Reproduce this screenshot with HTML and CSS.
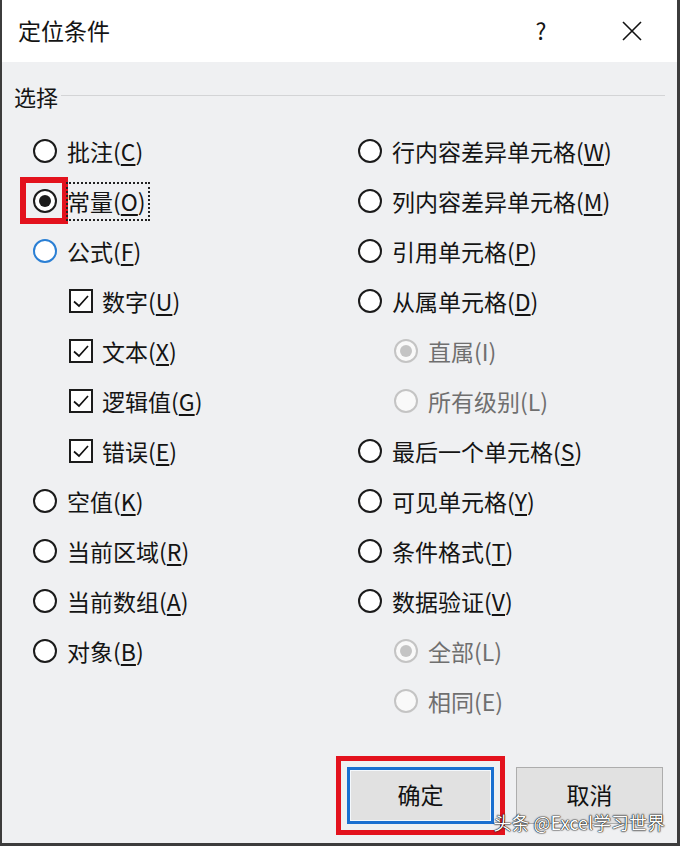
FILE: index.html
```html
<!DOCTYPE html>
<html lang="zh-CN">
<head>
<meta charset="utf-8">
<title>定位条件</title>
<link rel="stylesheet" href="styles.css">
</head>
<body>
<div class="dialog">
  <header class="titlebar">
    <span class="title">定位条件</span>
    <span class="help">?</span>
    <span class="close">
      <svg width="20" height="20" viewBox="0 0 20 20"><path d="M1 1 L19 19 M19 1 L1 19" stroke="#111" stroke-width="1.6" fill="none"/></svg>
    </span>
  </header>
  <main class="content">
    <div class="group-head"><span class="group-title">选择</span><span class="rule"></span></div>
    <div class="cols">
      <div class="col">
        <div class="opt"><span class="radio"></span><span class="lbl">批注(<u>C</u>)</span></div>
        <div class="opt"><span class="radio checked marked"></span><span class="lbl focus">常量(<u>O</u>)</span></div>
        <div class="opt"><span class="radio hover"></span><span class="lbl">公式(<u>F</u>)</span></div>
        <div class="opt sub"><span class="check"><svg width="20" height="20" viewBox="0 0 20 20"><path d="M3 10.5 L8 15 L17 5" stroke="#111" stroke-width="1.7" fill="none"/></svg></span><span class="lbl">数字(<u>U</u>)</span></div>
        <div class="opt sub"><span class="check"><svg width="20" height="20" viewBox="0 0 20 20"><path d="M3 10.5 L8 15 L17 5" stroke="#111" stroke-width="1.7" fill="none"/></svg></span><span class="lbl">文本(<u>X</u>)</span></div>
        <div class="opt sub"><span class="check"><svg width="20" height="20" viewBox="0 0 20 20"><path d="M3 10.5 L8 15 L17 5" stroke="#111" stroke-width="1.7" fill="none"/></svg></span><span class="lbl">逻辑值(<u>G</u>)</span></div>
        <div class="opt sub"><span class="check"><svg width="20" height="20" viewBox="0 0 20 20"><path d="M3 10.5 L8 15 L17 5" stroke="#111" stroke-width="1.7" fill="none"/></svg></span><span class="lbl">错误(<u>E</u>)</span></div>
        <div class="opt"><span class="radio"></span><span class="lbl">空值(<u>K</u>)</span></div>
        <div class="opt"><span class="radio"></span><span class="lbl">当前区域(<u>R</u>)</span></div>
        <div class="opt"><span class="radio"></span><span class="lbl">当前数组(<u>A</u>)</span></div>
        <div class="opt"><span class="radio"></span><span class="lbl">对象(<u>B</u>)</span></div>
      </div>
      <div class="col">
        <div class="opt"><span class="radio"></span><span class="lbl">行内容差异单元格(<u>W</u>)</span></div>
        <div class="opt"><span class="radio"></span><span class="lbl">列内容差异单元格(<u>M</u>)</span></div>
        <div class="opt"><span class="radio"></span><span class="lbl">引用单元格(<u>P</u>)</span></div>
        <div class="opt"><span class="radio"></span><span class="lbl">从属单元格(<u>D</u>)</span></div>
        <div class="opt sub disabled"><span class="radio checked"></span><span class="lbl">直属(I)</span></div>
        <div class="opt sub disabled"><span class="radio"></span><span class="lbl">所有级别(L)</span></div>
        <div class="opt"><span class="radio"></span><span class="lbl">最后一个单元格(<u>S</u>)</span></div>
        <div class="opt"><span class="radio"></span><span class="lbl">可见单元格(<u>Y</u>)</span></div>
        <div class="opt"><span class="radio"></span><span class="lbl">条件格式(<u>T</u>)</span></div>
        <div class="opt"><span class="radio"></span><span class="lbl">数据验证(<u>V</u>)</span></div>
        <div class="opt sub disabled"><span class="radio checked"></span><span class="lbl">全部(L)</span></div>
        <div class="opt sub disabled"><span class="radio"></span><span class="lbl">相同(E)</span></div>
      </div>
    </div>
    <div class="buttons">
      <button class="btn default marked">确定</button>
      <button class="btn">取消</button>
    </div>
    <div class="watermark">头条 @Excel学习世界</div>
  </main>
</div>
</body>
</html>
```

FILE: styles.css
```css
* { box-sizing: border-box; }
html, body { margin: 0; padding: 0; }
body {
  width: 680px;
  height: 846px;
  overflow: hidden;
  font-family: "Noto Sans CJK SC", "Noto Sans", sans-serif;
  color: #141414;
  background: #f0f0f2;
}
.dialog {
  width: 680px;
  height: 846px;
  display: flex;
  flex-direction: column;
  border-left: 2px solid #3c3c3c;
  border-right: 3px solid #3c3c3c;
  border-bottom: 3px solid #3c3c3c;
  background: #eff0f2;
}
.titlebar {
  height: 62px;
  flex: none;
  background: #ffffff;
  display: flex;
  align-items: center;
  padding-left: 16px;
}
.title {
  font-size: 23px;
  line-height: 30px;
  flex: 1;
  margin-top: -2px;
}
.help {
  font-size: 23px;
  line-height: 30px;
  width: 20px;
  text-align: center;
  margin-right: 71px;
  margin-top: -2px;
}
.close {
  width: 20px;
  height: 20px;
  margin-right: 35px;
  display: flex;
}
.content {
  flex: 1;
  position: relative;
  padding: 19px 12px 0 12px;
}
.group-head {
  display: flex;
  align-items: center;
  height: 30px;
}
.group-title {
  font-size: 22px;
  line-height: 30px;
  margin-right: 3px;
}
.rule {
  flex: 1;
  height: 1px;
  background: #d3d4d6;
  margin-top: -2px;
}
.cols {
  display: grid;
  grid-template-columns: 325px 1fr;
  padding-left: 19px;
  margin-top: 15px;
}
.col {
  display: flex;
  flex-direction: column;
}
.opt {
  height: 50px;
  display: flex;
  align-items: center;
}
.opt.sub { padding-left: 36px; }
.radio {
  position: relative;
  width: 24px;
  height: 24px;
  border: 2px solid #1b1b1b;
  border-radius: 50%;
  background: #ffffff;
  flex: none;
  display: flex;
  align-items: center;
  justify-content: center;
  margin-right: 10px;
}
.radio.checked::after {
  content: "";
  width: 12px;
  height: 12px;
  border-radius: 50%;
  background: #1b1b1b;
}
.radio.hover { border-color: #2a7fd4; }
.radio.marked::before {
  content: "";
  position: absolute;
  left: -15px;
  right: -13px;
  top: -14px;
  bottom: -13px;
  border: 6px solid #e3121d;
}
.check {
  width: 24px;
  height: 24px;
  border: 2px solid #1b1b1b;
  background: #ffffff;
  flex: none;
  display: flex;
  align-items: center;
  justify-content: center;
  margin-right: 9px;
}
.lbl {
  font-size: 23px;
  line-height: 30px;
  white-space: nowrap;
  position: relative;
}
.lbl u { text-underline-offset: 3px; text-decoration-thickness: 1.5px; }
.lbl.focus::after {
  content: "";
  position: absolute;
  left: -1px;
  right: -4px;
  top: -4px;
  bottom: -5px;
  border: 2px dotted #222;
}
.disabled .lbl { color: #6f6f6f; }
.disabled .radio { border-color: #c4c4c4; background: #f9f9f9; }
.disabled .radio.checked::after { background: #c4c4c4; }
.buttons {
  display: flex;
  justify-content: flex-end;
  gap: 22px;
  margin-top: 41px;
  padding-right: 2px;
}
.btn {
  width: 147px;
  height: 57px;
  font-family: "Noto Sans CJK SC", sans-serif;
  font-size: 23px;
  line-height: 30px;
  color: #111;
  background: #e1e1e1;
  border: 1px solid #adadad;
  padding: 0 0 4px 0;
}
.btn.default {
  border: 3px solid #1a6fd0;
  box-shadow: inset 0 0 0 1px #f4f8fc;
}
.btn.marked {
  outline: 5px solid #e3121d;
  outline-offset: 6px;
}
.watermark {
  position: absolute;
  right: 12px;
  bottom: 10px;
  font-size: 18px;
  line-height: 22px;
  color: #ffffff;
  text-shadow: 0 0 1px #000, 0 0 1px #000, 0 0 2px #333;
  font-family: "Noto Sans CJK SC", sans-serif;
}
```
